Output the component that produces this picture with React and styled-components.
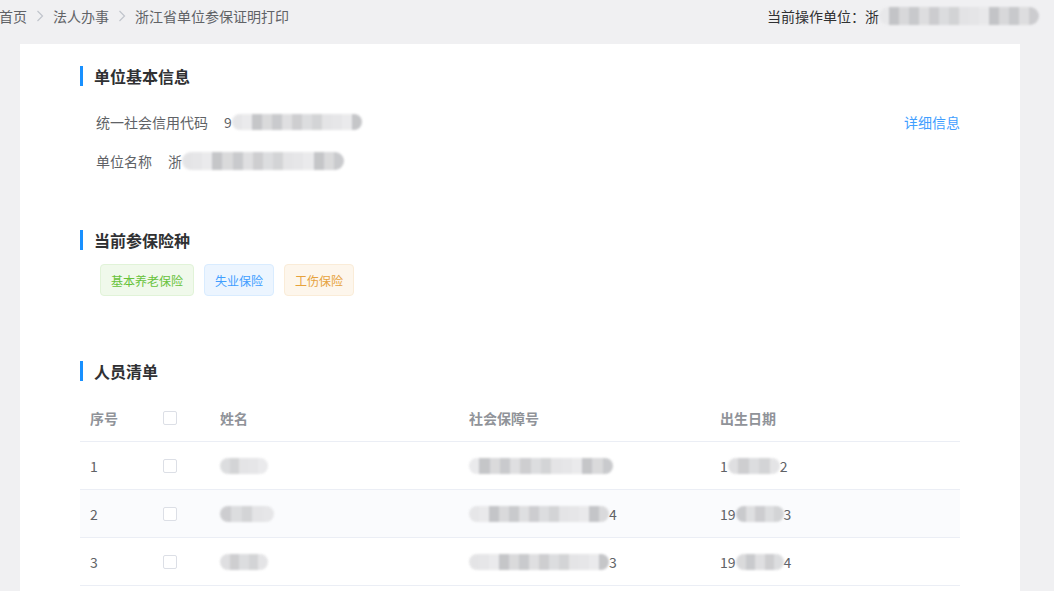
import React from 'react'
import styled, { createGlobalStyle } from 'styled-components'

const GlobalStyle = createGlobalStyle`
  html, body {
    margin: 0;
    padding: 0;
    background: #f0f0f2;
    font-family: "Noto Sans CJK SC", "Noto Sans", sans-serif;
    font-size: 14px;
    color: #606266;
  }
`

const PALETTE = ['#d6d6d8', '#c9c9cc', '#e2e2e4', '#bfc0c3', '#dcdcde', '#cfd0d2', '#e8e8ea', '#c4c5c8', '#d9dadc', '#e4e4e6']

function cells(count, seed) {
  const step = 100 / count
  const stops = []
  for (let i = 0; i < count; i++) {
    const c = PALETTE[(i * 7 + seed * 3) % PALETTE.length]
    stops.push(`${c} ${(i * step).toFixed(2)}%`, `${c} ${((i + 1) * step).toFixed(2)}%`)
  }
  return `linear-gradient(90deg, ${stops.join(', ')})`
}

function Mosaic({ width, height = 16, seed = 1 }) {
  return <MosaicStyled $w={width} $h={height} $bg={cells(Math.max(3, Math.round(width / 10)), seed)} />
}

export default function App() {
  const rows = [
    { n: 1, name: 48, ssn: 144, pre: '1', dob: 52, post: '2' },
    { n: 2, name: 54, ssn: 140, ssnEnd: '4', pre: '19', dob: 48, post: '3' },
    { n: 3, name: 48, ssn: 140, ssnEnd: '3', pre: '19', dob: 48, post: '4' },
  ]

  return (
    <>
      <GlobalStyle />
      <TopBar>
        <Crumbs>
          <Crumb>首页</Crumb>
          <Chevron />
          <Crumb>法人办事</Crumb>
          <Chevron />
          <Crumb>浙江省单位参保证明打印</Crumb>
        </Crumbs>
        <Operator>
          当前操作单位：浙
          <Mosaic width={160} height={18} seed={2} />
        </Operator>
      </TopBar>

      <Card>
        <SectionTitle>单位基本信息</SectionTitle>
        <InfoList>
          <InfoRow>
            <Label>统一社会信用代码</Label>
            <Value>9<Mosaic width={130} seed={3} /></Value>
            <Link>详细信息</Link>
          </InfoRow>
          <InfoRow>
            <Label>单位名称</Label>
            <Value>浙<Mosaic width={162} height={18} seed={4} /></Value>
          </InfoRow>
        </InfoList>

        <SectionTitle $top={50}>当前参保险种</SectionTitle>
        <TagList>
          <Tag $kind="green">基本养老保险</Tag>
          <Tag $kind="blue">失业保险</Tag>
          <Tag $kind="orange">工伤保险</Tag>
        </TagList>

        <SectionTitle $top={65}>人员清单</SectionTitle>
        <Table>
          <HeadRow>
            <Cell>序号</Cell>
            <Cell><Checkbox /></Cell>
            <Cell>姓名</Cell>
            <Cell>社会保障号</Cell>
            <Cell>出生日期</Cell>
          </HeadRow>
          {rows.map((r, i) => (
            <BodyRow key={r.n} $striped={i % 2 === 1}>
              <Cell>{r.n}</Cell>
              <Cell><Checkbox /></Cell>
              <Cell><Mosaic width={r.name} seed={r.n + 5} /></Cell>
              <Cell><Mosaic width={r.ssn} seed={r.n + 1} />{r.ssnEnd}</Cell>
              <Cell>{r.pre}<Mosaic width={r.dob} seed={r.n + 7} />{r.post}</Cell>
            </BodyRow>
          ))}
        </Table>
      </Card>
    </>
  )
}

function Chevron() {
  return (
    <ChevronSvg viewBox="0 0 8 12" width="8" height="12">
      <path d="M1.5 1 L6.5 6 L1.5 11" fill="none" stroke="#c0c4cc" strokeWidth="1.2" />
    </ChevronSvg>
  )
}

const TopBar = styled.div`
  display: flex;
  align-items: center;
  justify-content: space-between;
  height: 32px;
  padding: 0 15px 0 0;
  margin-bottom: 12px;
`

const Crumbs = styled.div`
  display: flex;
  align-items: center;
  gap: 9px;
  margin-left: -1px;
`

const Crumb = styled.span`
  color: #606266;
  font-size: 14px;
`

const ChevronSvg = styled.svg`
  display: block;
`

const Operator = styled.div`
  display: flex;
  align-items: center;
  color: #303133;
  font-size: 14px;
`

const MosaicStyled = styled.span`
  display: inline-block;
  vertical-align: middle;
  width: ${p => p.$w}px;
  height: ${p => p.$h}px;
  background: ${p => p.$bg};
  border-radius: ${p => p.$h / 2}px;
  filter: blur(0.8px);
  opacity: 0.9;
`

const Card = styled.div`
  background: #fff;
  margin: 0 34px 0 20px;
  padding: 22px 60px 40px;
  min-height: 560px;
`

const SectionTitle = styled.h3`
  margin: ${p => p.$top || 0}px 0 0;
  height: 20px;
  line-height: 20px;
  padding-left: 11px;
  border-left: 3px solid #1890ff;
  font-size: 16px;
  font-weight: bold;
  color: #303133;
`

const InfoList = styled.div`
  margin-top: 16px;
  padding-left: 16px;
`

const InfoRow = styled.div`
  display: flex;
  align-items: center;
  height: 39px;
  gap: 16px;
`

const Label = styled.span`
  color: #606266;
`

const Value = styled.span`
  display: flex;
  align-items: center;
  color: #606266;
`

const Link = styled.a`
  margin-left: auto;
  color: #409eff;
  cursor: pointer;
`

const TAG_COLORS = {
  green: { bg: '#f0f9eb', border: '#e1f3d8', color: '#67c23a' },
  blue: { bg: '#ecf5ff', border: '#d9ecff', color: '#409eff' },
  orange: { bg: '#fdf6ec', border: '#faecd8', color: '#e6a23c' },
}

const TagList = styled.div`
  display: flex;
  gap: 10px;
  margin-top: 14px;
  padding-left: 20px;
`

const Tag = styled.span`
  display: inline-flex;
  align-items: center;
  height: 32px;
  box-sizing: border-box;
  padding: 0 10px;
  font-size: 12px;
  border-radius: 4px;
  background: ${p => TAG_COLORS[p.$kind].bg};
  border: 1px solid ${p => TAG_COLORS[p.$kind].border};
  color: ${p => TAG_COLORS[p.$kind].color};
`

const Table = styled.div`
  margin-top: 13px;
`

const RowBase = styled.div`
  display: grid;
  grid-template-columns: 73px 57px 249px 251px 1fr;
  align-items: center;
  height: 47px;
  border-bottom: 1px solid #ebeef5;
`

const HeadRow = styled(RowBase)`
  color: #909399;
  font-weight: bold;
`

const BodyRow = styled(RowBase)`
  background: ${p => (p.$striped ? '#fafbfd' : '#fff')};
  color: #606266;
`

const Cell = styled.div`
  display: flex;
  align-items: center;
  padding-left: 10px;
`

const Checkbox = styled.span`
  display: inline-block;
  width: 14px;
  height: 14px;
  box-sizing: border-box;
  border: 1px solid #dcdfe6;
  border-radius: 2px;
  background: #fff;
`
